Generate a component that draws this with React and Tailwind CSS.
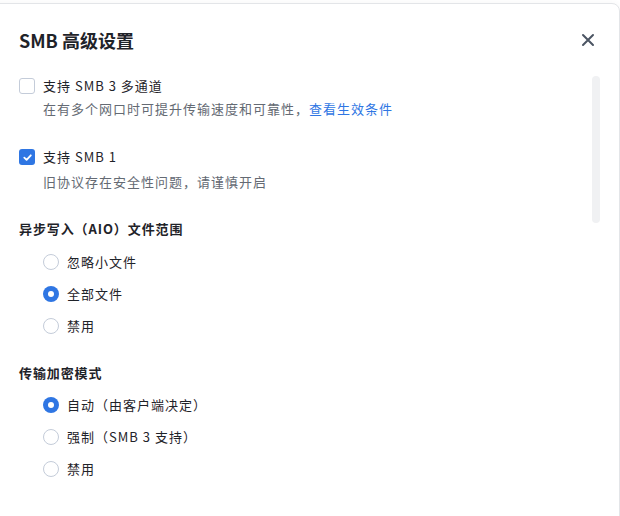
import React from "react";

function Checkbox({ checked }) {
  return checked ? (
    <span className="flex h-4 w-4 shrink-0 items-center justify-center rounded-[3px] bg-[#2f76e3]">
      <svg width="11" height="11" viewBox="0 0 12 12" fill="none">
        <path d="M2.5 6.2 L5 8.6 L9.6 3.6" stroke="white" strokeWidth="2" strokeLinecap="round" strokeLinejoin="round" />
      </svg>
    </span>
  ) : (
    <span className="block h-4 w-4 shrink-0 rounded-[3px] border border-[#c4ccd9] bg-white" />
  );
}

function Radio({ checked }) {
  return checked ? (
    <span className="flex h-4 w-4 shrink-0 items-center justify-center rounded-full bg-[#2f76e3]">
      <span className="block h-[6px] w-[6px] rounded-full bg-white" />
    </span>
  ) : (
    <span className="block h-4 w-4 shrink-0 rounded-full border border-[#c4ccd9] bg-white" />
  );
}

function RadioRow({ checked, label }) {
  return (
    <div className="flex h-[22px] items-center gap-2 pl-6">
      <Radio checked={checked} />
      <span className="text-[13px] leading-[22px] tracking-[1px] text-[#1f2329]">{label}</span>
    </div>
  );
}

export default function App() {
  const font = { fontFamily: '"Noto Sans CJK SC", "Noto Sans", sans-serif' };
  return (
    <div className="h-[516px] w-[620px] overflow-hidden bg-white" style={font}>
      <div className="relative mt-[3px] -ml-3 h-[600px] w-[632px] rounded-t-lg border border-[#e3e5e8] bg-white shadow-[0_0_6px_rgba(0,0,0,0.04)]">
        <div className="flex items-center justify-between pl-[30px] pr-[24px] pt-[24px]">
          <h1 className="text-[18px] font-semibold leading-6 text-[#1f2329]">SMB 高级设置</h1>
          <svg width="14" height="14" viewBox="0 0 14 14" fill="none">
            <path d="M2 2 L12 12 M12 2 L2 12" stroke="#4b5563" strokeWidth="2" strokeLinecap="round" />
          </svg>
        </div>

        <div className="pl-[30px]">
          <div className="mt-[23px] flex h-[22px] items-center gap-2">
            <Checkbox checked={false} />
            <span className="text-[13px] leading-[22px] tracking-[1px] text-[#1f2329]">支持 SMB 3 多通道</span>
          </div>
          <p className="mt-px pl-6 text-[13px] leading-[22px] tracking-[1px] text-[#646a73]">
            在有多个网口时可提升传输速度和可靠性，<span className="text-[#2f76e3]">查看生效条件</span>
          </p>

          <div className="mt-[26px] flex h-[22px] items-center gap-2">
            <Checkbox checked={true} />
            <span className="text-[13px] leading-[22px] tracking-[1px] text-[#1f2329]">支持 SMB 1</span>
          </div>
          <p className="mt-[3px] pl-6 text-[13px] leading-[22px] tracking-[1px] text-[#646a73]">旧协议存在安全性问题，请谨慎开启</p>

          <h2 className="mt-[25px] text-[13px] font-semibold leading-[22px] tracking-[0.9px] text-[#1f2329]">异步写入（AIO）文件范围</h2>
          <div className="mt-[11px] flex flex-col gap-[10px]">
            <RadioRow checked={false} label="忽略小文件" />
            <RadioRow checked={true} label="全部文件" />
            <RadioRow checked={false} label="禁用" />
          </div>

          <h2 className="mt-[25px] text-[13px] font-semibold leading-[22px] tracking-[0.9px] text-[#1f2329]">传输加密模式</h2>
          <div className="mt-[10px] flex flex-col gap-[10px]">
            <RadioRow checked={true} label="自动（由客户端决定）" />
            <RadioRow checked={false} label="强制（SMB 3 支持）" />
            <RadioRow checked={false} label="禁用" />
          </div>
        </div>

        <div className="absolute left-[603px] top-[72px] h-[147px] w-2 rounded-full bg-[#f0f1f3]" />
      </div>
    </div>
  );
}
